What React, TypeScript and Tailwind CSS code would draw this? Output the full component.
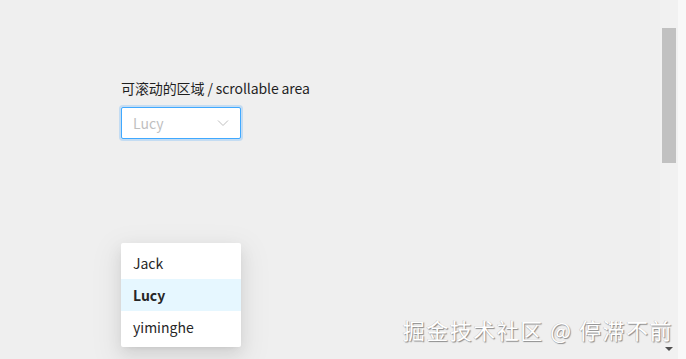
import React from "react";

export default function App() {
  const font = { fontFamily: '"Noto Sans CJK SC", "Noto Sans", sans-serif' };
  return (
    <div className="relative flex h-[359px] w-[686px] overflow-hidden bg-[#efefef]" style={font}>
      <div className="flex-1 pl-[121px] pt-[78px]">
        <div className="h-[20px] text-[14px] leading-[20px] tracking-[-0.1px] text-[#1f1f1f]">可滚动的区域 / scrollable area</div>
        <div className="mt-[9px] flex h-[32px] w-[120px] items-center justify-between rounded-[2px] border border-[#40a9ff] bg-white pl-[11px] pr-[11px] shadow-[0_0_0_2px_rgba(24,144,255,0.2)]">
          <span className="text-[14px] text-[#bfbfbf]">Lucy</span>
          <svg width="12" height="12" viewBox="0 0 12 12" fill="none" stroke="#bfbfbf" strokeWidth="1">
            <path d="M1 3.5 L6 8.5 L11 3.5" />
          </svg>
        </div>
        <div className="mt-[104px] w-[120px] rounded-[2px] bg-white py-[4px] shadow-[0_3px_6px_-4px_rgba(0,0,0,0.12),0_6px_16px_0_rgba(0,0,0,0.08),0_9px_28px_8px_rgba(0,0,0,0.05)]">
          <div className="flex h-[32px] items-center px-[12px] text-[14px] text-[#262626]">Jack</div>
          <div className="flex h-[32px] items-center bg-[#e6f7ff] px-[12px] text-[14px] font-semibold text-[#262626]">Lucy</div>
          <div className="flex h-[32px] items-center px-[12px] text-[14px] text-[#262626]">yiminghe</div>
        </div>
      </div>
      <div className="flex w-[18px] flex-col bg-[#f1f1f1]">
        <div className="h-[28px]" />
        <div className="ml-[2px] h-[135px] w-[14px] bg-[#c1c1c1]" />
        <div className="flex-1" />
        <div className="flex h-[14px] items-start justify-center pt-[2px]">
          <svg width="8" height="5" viewBox="0 0 8 5"><path d="M0 0 L8 0 L4 4 Z" fill="#505050" /></svg>
        </div>
      </div>
      <div className="w-[8px] bg-[#f8f8f8]" />
      <div
        className="absolute right-[13px] top-[314px] text-[22px] leading-[30px] tracking-[1.5px] text-white"
        style={{ textShadow: "1px 1px 1px #8a8a8a, -0.5px -0.5px 0 #bdbdbd" }}
      >
        掘金技术社区 @ 停滞不前
      </div>
    </div>
  );
}
